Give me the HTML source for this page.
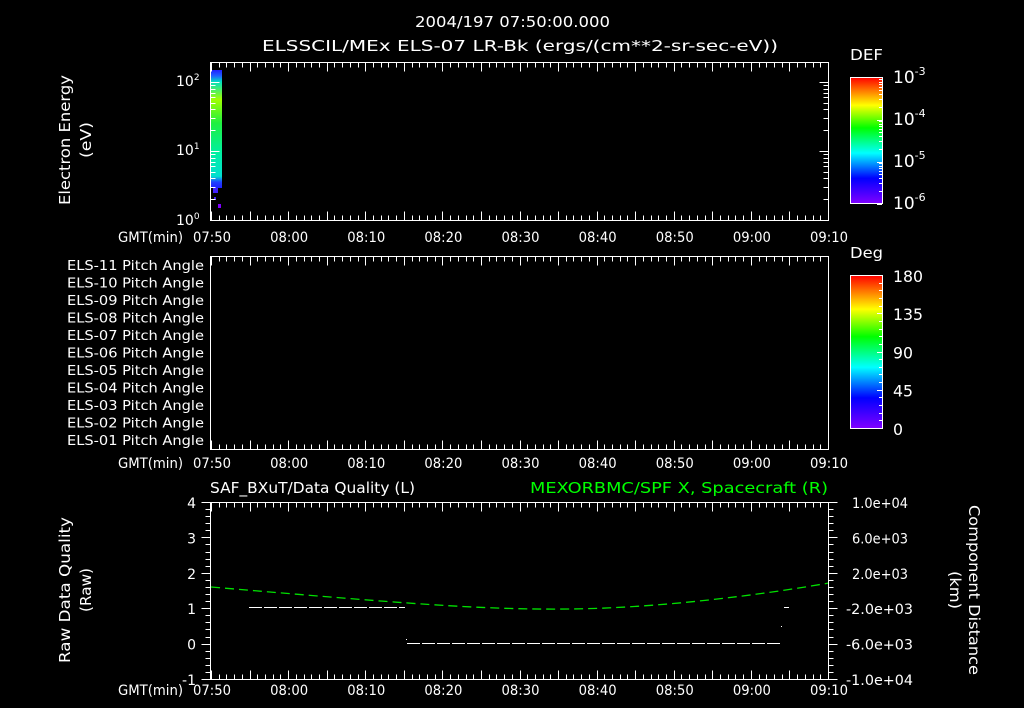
<!DOCTYPE html>
<html><head><meta charset="utf-8"><style>
html,body{margin:0;padding:0;background:#000;width:1024px;height:708px;overflow:hidden}
svg{display:block}
text{font-family:"DejaVu Sans","Liberation Sans",sans-serif;fill:#fff;font-size:13px}
</style></head><body>
<svg id="s" width="1024" height="708" viewBox="0 0 1024 708" xmlns="http://www.w3.org/2000/svg">
<defs>
<linearGradient id="rb" x1="0" y1="1" x2="0" y2="0">
<stop offset="0" stop-color="#8000ff"/><stop offset="0.2" stop-color="#0000ff"/>
<stop offset="0.4" stop-color="#00ffff"/><stop offset="0.6" stop-color="#00ff00"/>
<stop offset="0.78" stop-color="#ffff00"/><stop offset="1" stop-color="#ff0000"/>
</linearGradient>
<linearGradient id="sp" x1="0" y1="0" x2="0" y2="1">
<stop offset="0" stop-color="#2020ff"/><stop offset="0.05" stop-color="#2060ff"/>
<stop offset="0.1" stop-color="#00e0c0"/><stop offset="0.25" stop-color="#a0ff00"/>
<stop offset="0.45" stop-color="#20f040"/><stop offset="0.7" stop-color="#00f0a0"/>
<stop offset="0.9" stop-color="#00e0d0"/><stop offset="0.95" stop-color="#2040ff"/><stop offset="1" stop-color="#2020ff"/>
</linearGradient>
</defs>
<text x="415" y="27" textLength="195" lengthAdjust="spacingAndGlyphs" style="font-size:15px">2004/197 07:50:00.000</text>
<text x="262" y="51" textLength="516" lengthAdjust="spacingAndGlyphs" style="font-size:15px">ELSSCIL/MEx ELS-07 LR-Bk  (ergs/(cm**2-sr-sec-eV))</text>
<text x="850" y="60" textLength="33" lengthAdjust="spacingAndGlyphs" style="font-size:15px">DEF</text>
<text x="850" y="258" textLength="33" lengthAdjust="spacingAndGlyphs" style="font-size:15px">Deg</text>

<rect x="211" y="70" width="11" height="118" fill="url(#sp)"/>
<rect x="213" y="188" width="5" height="5" fill="#4020ff"/>
<rect x="214" y="197" width="2" height="3" fill="#4020ff"/>
<rect x="218" y="204" width="3" height="4" fill="#8000ff"/>

<text x="210" y="493" textLength="205" lengthAdjust="spacingAndGlyphs" style="font-size:15px">SAF_BXuT/Data Quality (L)</text>
<text x="530" y="493" textLength="298" lengthAdjust="spacingAndGlyphs" style="font-size:15px;fill:#00ff00">MEXORBMC/SPF X, Spacecraft (R)</text>

<text transform="translate(70,140) rotate(-90)" text-anchor="middle" textLength="130" lengthAdjust="spacingAndGlyphs" style="font-size:15px">Electron Energy</text>
<text transform="translate(91,140) rotate(-90)" text-anchor="middle" textLength="36" lengthAdjust="spacingAndGlyphs" style="font-size:15px">(eV)</text>
<text transform="translate(70,590) rotate(-90)" text-anchor="middle" textLength="146" lengthAdjust="spacingAndGlyphs" style="font-size:15px">Raw Data Quality</text>
<text transform="translate(91,590) rotate(-90)" text-anchor="middle" textLength="44" lengthAdjust="spacingAndGlyphs" style="font-size:15px">(Raw)</text>
<text transform="translate(969,590) rotate(90)" text-anchor="middle" textLength="170" lengthAdjust="spacingAndGlyphs" style="font-size:15px">Component Distance</text>
<text transform="translate(950,590) rotate(90)" text-anchor="middle" textLength="38" lengthAdjust="spacingAndGlyphs" style="font-size:15px">(km)</text>

<rect x="850.5" y="77.5" width="32" height="126" fill="url(#rb)" stroke="#fff"/>
<rect x="850.5" y="275.5" width="32" height="153" fill="url(#rb)" stroke="#fff"/>

<path d="M211 587 C 400 603, 480 610, 570 609 S 760 595, 829 583" fill="none" stroke="#00e000" stroke-width="1.3" stroke-dasharray="9,5"/>
<path d="M249 607.5 H405" stroke="#fff" stroke-dasharray="13,2"/>
<path d="M407 643.5 H781" stroke="#fff" stroke-dasharray="13,2"/>
<path d="M784 607.5 H789" stroke="#fff"/>
<rect x="781" y="626" width="1" height="1" fill="#fff"/>
<rect x="406" y="639" width="1" height="1" fill="#fff"/>
<g id="ax"></g>
</svg>
<script>
var g=document.getElementById('ax'),o='';
function L(x1,y1,x2,y2){o+='<line x1="'+x1+'" y1="'+y1+'" x2="'+x2+'" y2="'+y2+'" stroke="#fff"/>';}
function T(x,y,t,a,sz,tl){o+='<text x="'+x+'" y="'+y+'" text-anchor="'+(a||'start')+'"'+(tl?' textLength="'+tl+'" lengthAdjust="spacingAndGlyphs"':'')+(sz?' style="font-size:'+sz+'px"':'')+'>'+t+'</text>';}
var X0=210.5,X1=828.5;
var panels=[[62.5,220.5,242],[256.5,449.5,468],[502.5,679.5,695]];
var tl=['07:50','08:00','08:10','08:20','08:30','08:40','08:50','09:00','09:10'];
panels.forEach(function(p){
 var t=p[0],b=p[1];
 o+='<rect x="'+X0+'" y="'+t+'" width="'+(X1-X0)+'" height="'+(b-t)+'" fill="none" stroke="#fff"/>';
 for(var m=0;m<=80;m++){var x=Math.round(211+m*617/80)+0.5;var len=m%5==0?9:5;
  L(x,b,x,b-len);L(x,t,x,t+len);}
 tl.forEach(function(s,i){T(211+i*617/8+1,p[2],s,'middle',14,38);});
 T(118,p[2],'GMT(min)','start',14,65);
});
function ly(v){return 220-Math.log10(v)*69;}
for(var d=0;d<3;d++)for(var k=1;k<10;k++){var v=k*Math.pow(10,d),y=ly(v);if(y<63)continue;y=Math.round(y)+0.5;var len=k==1?9:5;L(X0,y,X0+len,y);L(X1,y,X1-len,y);}
T(176,225,'10<tspan dy="-6" font-size="9">0</tspan>','start',14);
T(176,155,'10<tspan dy="-6" font-size="9">1</tspan>','start',14);
T(176,86,'10<tspan dy="-6" font-size="9">2</tspan>','start',14);
for(var d=0;d<3;d++)for(var k=1;k<10;k++){var y=203.5-(d+Math.log10(k))*42;if(y<78)continue;y=Math.round(y)+0.5;L(882,y,k==1?877:879,y);}
['-6','-5','-4','-3'].forEach(function(s,i){T(893,209-i*42,'10<tspan dy="-8" font-size="11">'+s+'</tspan>','start',17);});
for(var i=1;i<20;i++){var y=Math.round(428-i*153/20)+0.5;L(882,y,i%5==0?877:879,y);}
['0','45','90','135','180'].forEach(function(s,i){T(893,435-i*38.3,s,'start',16,s.length*10);});
for(var i=0;i<11;i++){var n=11-i;T(67,270+i*17.5,'ELS-'+(n<10?'0':'')+n+' Pitch Angle','start',13,137);}
for(var i=0;i<=25;i++){var y=Math.round(502+i*177/25)+0.5;var len=i%5==0?9:5;L(X0,y,X0-len,y);L(X1,y,X1+len,y);}
['4','3','2','1','0','-1'].forEach(function(s,i){T(196,508+i*35.4,s,'end',14);});
['1.0e+04','6.0e+03','2.0e+03','-2.0e+03','-6.0e+03','-1.0e+04'].forEach(function(s,i){T(s[0]=='-'?846:852,508+i*35.4,s,'start',14,s[0]=='-'?67:56);});
g.innerHTML=o;
</script>
</body></html>
